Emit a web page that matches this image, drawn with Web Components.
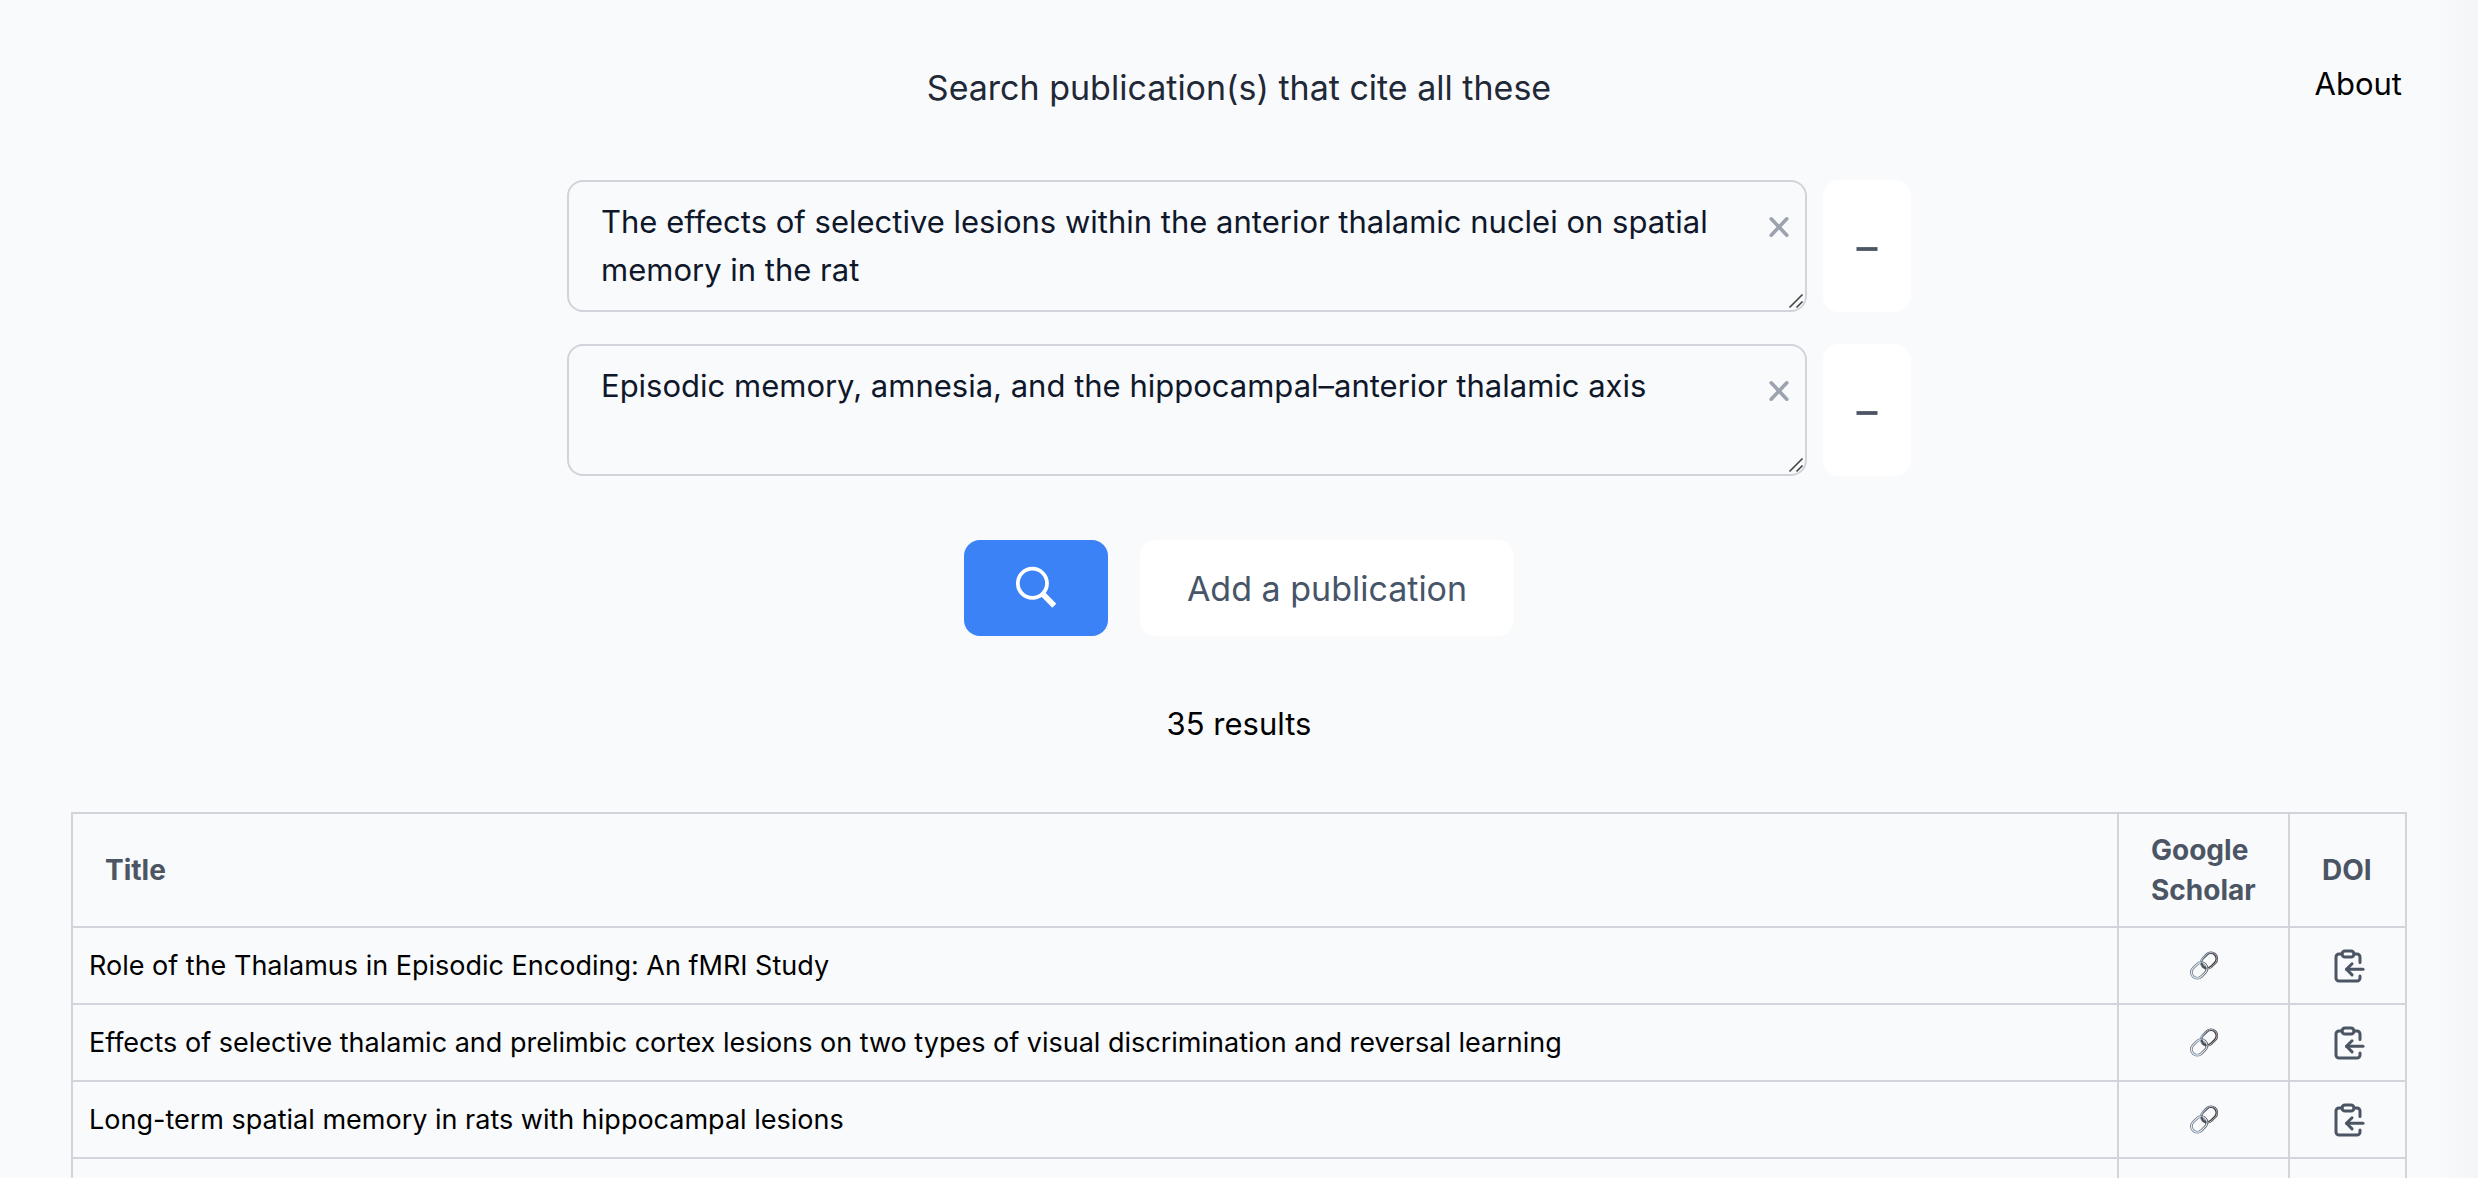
<!DOCTYPE html>
<html lang="en">
<head>
<meta charset="utf-8">
<meta name="viewport" content="width=device-width, initial-scale=1">
<title>Co-citation search</title>
<style>
  :root {
    --page: #f9fafc;
    --line: #d2d4dc;
    --muted: #4b5563;
    --slate: #475569;
    --size-s: 27px;
    --size-th: 28px;
    --size-m: 31px;
    --size-l: 34px;
  }
  html, body { height: 100%; }
  body {
    margin: 0;
    overflow: hidden;
    font-family: Inter, "Liberation Sans", sans-serif;
    color: #000;
    background: linear-gradient(to left, #f4f5f7, var(--page) 40px) var(--page);
  }
</style>
</head>
<body>
<citation-app></citation-app>
<script>
const define = (name, html, setup) => {
  const template = document.createElement('template');
  template.innerHTML = '<style>*{box-sizing:border-box}button{font:inherit;border:0;cursor:pointer}</style>' + html;
  customElements.define(name, class extends HTMLElement {
    constructor() {
      super();
      this.attachShadow({ mode: 'open' }).append(template.content.cloneNode(true));
    }
    connectedCallback() { if (setup) setup(this, this.shadowRoot); }
  });
};

define('search-icon', `
  <style>:host{display:block;width:44px;height:44px}svg{display:block}</style>
  <svg width="44" height="44" viewBox="0 0 44 44" fill="none" stroke="#fff" aria-hidden="true">
    <circle cx="18.4" cy="17.300" r="14.600" stroke-width="3.800"/>
    <path d="M28 27.300 40.300 39.800" stroke-width="5.600"/>
  </svg>`);

define('link-icon', `
  <style>:host{display:block;width:30px;height:30px}svg{display:block}</style>
  <svg width="30" height="30" viewBox="0 0 30 30" fill="none" aria-hidden="true">
    <defs>
      <linearGradient id="upper" x1="0" y1="0" x2="1" y2="1">
        <stop offset="0" stop-color="#8296ab"/><stop offset=".45" stop-color="#4e4a50"/><stop offset="1" stop-color="#3a2426"/>
      </linearGradient>
      <linearGradient id="lower" x1="0" y1="0" x2="1" y2="1">
        <stop offset="0" stop-color="#5f6770"/><stop offset=".5" stop-color="#74818e"/><stop offset="1" stop-color="#3d3636"/>
      </linearGradient>
    </defs>
    <g transform="rotate(-45 20 9.600)">
      <rect x="11.400" y="3.700" width="17.200" height="11.800" rx="5.900" stroke="url(#upper)" stroke-width="2.600"/>
      <rect x="11.100" y="3.400" width="17.800" height="12.400" rx="6.200" stroke="#c3d6e8" stroke-width=".8"/>
    </g>
    <g transform="rotate(-45 10.200 19.400)">
      <rect x="1.600" y="13.500" width="17.200" height="11.800" rx="5.900" stroke="url(#lower)" stroke-width="2.600"/>
      <rect x="1.600" y="13.500" width="17.200" height="11.800" rx="5.900" stroke="#dfebf6" stroke-width="1.200"/>
    </g>
    <path d="M12.600 11.500c.3 3.200 1.600 5.200 4.800 6.100" stroke="#4b4a50" stroke-width="1.800"/>
  </svg>`);

define('clipboard-icon', `
  <style>:host{display:block;width:36px;height:36px}svg{display:block}</style>
  <svg width="36" height="36" viewBox="0 0 24 24" fill="none" stroke="#4b5563" stroke-width="2" stroke-linecap="round" stroke-linejoin="round" aria-hidden="true">
    <rect x="8" y="2" width="8" height="4" rx="2"/>
    <path d="M8 4H6a2 2 0 0 0-2 2v14a2 2 0 0 0 2 2h12a2 2 0 0 0 2-2v-1.300"/>
    <path d="M16 4h2a2 2 0 0 1 2 2v3.600"/>
    <path d="M22 14.200H11"/>
    <path d="m14.700 10.500-3.700 3.700 3.700 3.700"/>
  </svg>`);

define('publication-field', `
  <style>
    :host{display:flex;gap:16px}
    .field{position:relative;flex:1;display:flex}
    textarea{flex:1;height:132px;margin:0;padding:16px 80px 16px 32px;border:2px solid var(--line);border-radius:16px;
      background:transparent;color:#0f172a;font:inherit;font-size:var(--size-m);line-height:48px;resize:vertical;overflow:hidden;outline:0}
    textarea::-webkit-resizer{display:none}
    .clear{position:absolute;right:16px;top:35px;padding:0;width:24px;height:24px;background:none}
    .grip{position:absolute;right:3px;bottom:3px;pointer-events:none}
    svg{display:block}
    .remove{width:88px;border-radius:16px;background:#fff;display:grid;place-items:center;padding:6px 0 0}
  </style>
  <div class="field">
    <textarea aria-label="Publication"></textarea>
    <button class="clear" aria-label="Clear">
      <svg width="24" height="24" viewBox="0 0 24 24" stroke="#9ca3af" stroke-width="3.600" stroke-linecap="round" aria-hidden="true"><path d="m4.200 3.800 15.600 16.400m0-16.400-15.600 16.400"/></svg>
    </button>
    <svg class="grip" width="16" height="16" viewBox="0 0 16 16" stroke="#444" stroke-width="1.600" aria-hidden="true"><path d="M1.500 14.500 14.500 1.500M8.500 14.500l6-6"/></svg>
  </div>
  <button class="remove" aria-label="Remove publication">
    <svg width="24" height="8" viewBox="0 0 24 8" stroke="#4b5563" stroke-width="3.800" aria-hidden="true"><path d="M1.500 4h21"/></svg>
  </button>`,
  (host, root) => { root.querySelector('textarea').value = host.getAttribute('value'); });

define('search-form', `
  <style>
    :host{display:flex;flex-direction:column;align-items:center}
    .fields{display:flex;flex-direction:column;gap:32px;width:100%;max-width:1344px}
    .actions{display:flex;gap:32px;margin-top:64px}
    .actions button{height:96px;padding:0 47px;border-radius:16px;font-size:var(--size-l)}
    .actions .search{width:144px;background:#3b82f6;display:grid;place-items:center}
    .actions .add{background:#fff;color:var(--slate)}
  </style>
  <div class="fields"><slot></slot></div>
  <div class="actions">
    <button class="search" aria-label="Search"><search-icon></search-icon></button>
    <button class="add">Add a publication</button>
  </div>`);

define('page-header', `
  <style>
    :host{display:grid;grid-template-columns:1fr auto 1fr;align-items:start;padding:60px 76px 64px}
    h1{grid-column:2;margin:0;font-size:var(--size-l);font-weight:400;line-height:56px;color:#1f2937}
    a{justify-self:end;color:#000;text-decoration:none;font-size:var(--size-m);line-height:48px}
  </style>
  <h1><slot></slot></h1><a href="#about">About</a>`);

define('results-table', `
  <style>
    :host{display:block;padding:0 71px}
    table{width:100%;border-collapse:collapse;font-size:var(--size-s);line-height:40px}
    th,td{border:2px solid var(--line)}
    th{padding:16px 32px;text-align:left;font-size:var(--size-th);font-weight:700;color:var(--muted)}
    td{height:77px;padding:0 16px}
    .scholar{width:171px}
    .doi{width:117px}
    a,td button{display:grid;place-items:center}
    td button{width:100%;padding:0;background:none}
  </style>
  <table>
    <thead><tr><th>Title</th><th class="scholar">Google Scholar</th><th class="doi">DOI</th></tr></thead>
    <tbody></tbody>
  </table>`,
  (host, root) => {
    const titles = [
      'Role of the Thalamus in Episodic Encoding: An fMRI Study',
      'Effects of selective thalamic and prelimbic cortex lesions on two types of visual discrimination and reversal learning',
      'Long-term spatial memory in rats with hippocampal lesions'
    ];
    root.querySelector('tbody').innerHTML = titles.map(title => `
      <tr><td>${title}</td>
      <td><a href="#scholar" aria-label="Google Scholar"><link-icon></link-icon></a></td>
      <td><button aria-label="Copy DOI"><clipboard-icon></clipboard-icon></button></td></tr>`).join('')
      + '<tr><td></td><td></td><td></td></tr>';
  });

define('citation-app', `
  <style>
    :host{display:block;height:100vh;overflow:hidden}
    .count{margin:64px 0;text-align:center;font-size:var(--size-m);line-height:48px}
  </style>
  <page-header>Search publication(s) that cite all these</page-header>
  <main>
    <search-form>
      <publication-field value="The effects of selective lesions within the anterior thalamic nuclei on spatial memory in the rat"></publication-field>
      <publication-field value="Episodic memory, amnesia, and the hippocampal–anterior thalamic axis"></publication-field>
    </search-form>
    <p class="count">35 results</p>
    <results-table></results-table>
  </main>`);
</script>
</body>
</html>
